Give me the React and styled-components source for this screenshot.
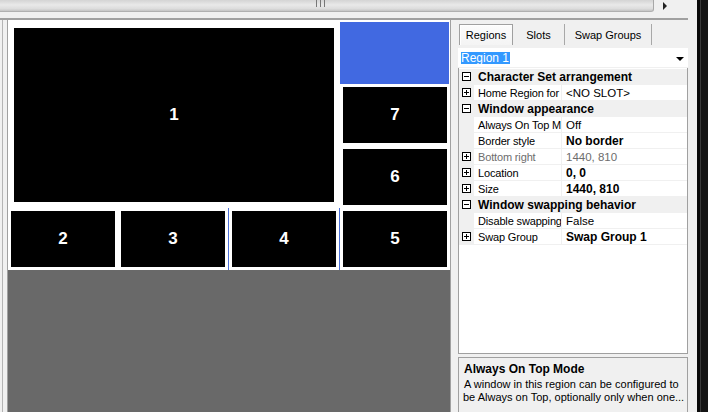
import React from "react";
import styled, { createGlobalStyle } from "styled-components";

const GlobalStyle = createGlobalStyle`
  html, body {
    margin: 0;
    padding: 0;
    background: #f0f0f0;
    overflow: hidden;
  }
  body {
    font-family: "Liberation Sans", Arial, sans-serif;
    font-size: 11px;
    color: #000;
  }
`;

const Frame = styled.div`
  display: flex;
  width: 708px;
  height: 412px;
  overflow: hidden;
`;

const Main = styled.div`
  display: flex;
  flex-direction: column;
  width: 688px;
  flex-shrink: 0;
  background: #f0f0f0;
`;

const ScrollRow = styled.div`
  display: flex;
  align-items: flex-start;
  height: 18px;
  border-bottom: 2px solid #a0a0a0;
  box-sizing: content-box;
`;

const Thumb = styled.div`
  width: 653px;
  height: 11px;
  background: linear-gradient(#d4d4d4, #e9e9e9 45%, #dcdcdc 80%, #c4c4c4);
  border-bottom: 1px solid #b0b0b0;
  border-right: 1px solid #a8a8a8;
  border-radius: 0 0 3px 0;
  display: flex;
  justify-content: center;
`;

const Grip = styled.div`
  margin-left: -12px;
  width: 7px;
  height: 7px;
  border-left: 1px solid #777;
  border-right: 1px solid #777;
  position: relative;
  &::after {
    content: "";
    position: absolute;
    left: 3px;
    top: 0;
    width: 1px;
    height: 7px;
    background: #777;
  }
`;

const ArrowRight = styled.div`
  margin: 2px 0 0 9px;
  width: 0;
  height: 0;
  border-top: 4px solid transparent;
  border-bottom: 4px solid transparent;
  border-left: 4px solid #222;
`;

const Body = styled.div`
  flex: 1;
  display: flex;
  min-height: 0;
`;

const Gutter = styled.div`
  flex-shrink: 0;
  width: 4px;
  margin-left: 2px;
  border-left: 1px solid #b4b4b4;
  border-right: 1px solid #a0a0a0;
`;

const Preview = styled.div`
  flex-shrink: 0;
  width: 442px;
  background: #696969;
  border-right: 1px solid #a0a0a0;
`;

const Canvas = styled.div`
  position: relative;
  width: 442px;
  height: 250px;
  background: #fff;
`;

const Region = styled.div`
  position: absolute;
  left: ${(p) => p.$x}px;
  top: ${(p) => p.$y}px;
  width: ${(p) => p.$w}px;
  height: ${(p) => p.$h}px;
  background: ${(p) => (p.$active ? "#4169e1" : "#000")};
  color: #fff;
  font-family: "Liberation Sans", Arial, sans-serif;
  font-weight: bold;
  font-size: 17px;
  display: flex;
  align-items: center;
  justify-content: center;
`;

const Marker = styled.div`
  position: absolute;
  left: ${(p) => p.$x}px;
  top: 188px;
  width: 1px;
  height: 62px;
  background: #4a6fd8;
`;

const Side = styled.div`
  flex: 1;
  min-width: 0;
  display: flex;
  flex-direction: column;
  padding: 4px 0 0 7px;
`;

const Tabs = styled.div`
  display: flex;
  height: 21px;
  align-items: stretch;
`;

const Tab = styled.div`
  box-sizing: border-box;
  width: ${(p) => p.$w}px;
  display: flex;
  align-items: center;
  justify-content: center;
  border-right: 1px solid #a8a8a8;
  ${(p) =>
    p.$selected &&
    `
    border: 1px solid #a0a0a0;
    border-bottom: none;
    background: linear-gradient(#fcfcfc, #f4f4f4);
    box-shadow: inset 1px 1px 0 #fff;
    margin-left: 1px;
  `}
`;

const Combo = styled.div`
  margin-top: 3px;
  height: 19px;
  background: #fff;
  display: flex;
  align-items: center;
  justify-content: space-between;
  padding: 0 4px 0 3px;
`;

const Selected = styled.span`
  background: #3399ff;
  color: #fff;
  padding: 0 1px 0 0;
  line-height: 12px;
  font-size: 12px;
`;

const DropArrow = styled.span`
  width: 0;
  height: 0;
  border-left: 4px solid transparent;
  border-right: 4px solid transparent;
  border-top: 4px solid #000;
  margin-top: 2px;
`;

const Grid = styled.div`
  margin-top: 1px;
  height: 286px;
  box-sizing: border-box;
  padding-top: 1px;
  background: #fff;
  border: 1px solid #a0a0a0;
  border-top: none;
  display: flex;
  flex-direction: column;
`;

const Row = styled.div`
  display: flex;
  height: 16px;
  flex-shrink: 0;
  box-sizing: border-box;
  border-bottom: 1px solid #f0f0f0;
  background: ${(p) => (p.$category ? "#f0f0f0" : "#fff")};
`;

const Margin = styled.div`
  width: 15px;
  flex-shrink: 0;
  background: #f0f0f0;
  display: flex;
  align-items: center;
  justify-content: center;
`;

const Box = styled.div`
  width: 7px;
  height: 7px;
  border: 1px solid #000;
  position: relative;
  background: #fff;
  &::before {
    content: "";
    position: absolute;
    left: 1px;
    top: 3px;
    width: 5px;
    height: 1px;
    background: #000;
  }
  &::after {
    content: "";
    display: ${(p) => (p.$open ? "none" : "block")};
    position: absolute;
    left: 3px;
    top: 1px;
    width: 1px;
    height: 5px;
    background: #000;
  }
`;

const CatTitle = styled.div`
  font-weight: bold;
  font-size: 12px;
  padding-left: 4px;
  line-height: 16px;
`;

const Label = styled.div`
  width: 88px;
  flex-shrink: 0;
  padding-left: 4px;
  box-sizing: border-box;
  border-right: 1px solid #f0f0f0;
  white-space: nowrap;
  overflow: hidden;
  line-height: 16px;
  font-size: 11px;
  letter-spacing: -0.15px;
  color: ${(p) => (p.$dim ? "#6d6d6d" : "#000")};
`;

const Value = styled.div`
  padding-left: 4px;
  line-height: 16px;
  font-size: ${(p) => (p.$bold ? "12px" : "11.5px")};
  white-space: nowrap;
  font-weight: ${(p) => (p.$bold ? "bold" : "normal")};
  color: ${(p) => (p.$dim ? "#6d6d6d" : "#000")};
`;

const Description = styled.div`
  margin-top: 3px;
  flex: 1;
  border: 1px solid #a0a0a0;
  border-bottom: none;
  padding: 4px 5px 0 5px;
  font-size: 11px;
  overflow: hidden;
`;

const DescTitle = styled.div`
  font-weight: bold;
  font-size: 12px;
  line-height: 14px;
  margin-bottom: 2px;
`;

const DescLine = styled.div`
  line-height: 13px;
  white-space: nowrap;
  margin-left: ${(p) => (p.$indent ? "-1px" : "0")};
`;

const EdgeStrip = styled.div`
  width: 9px;
  flex-shrink: 0;
  background: #f0f0f0;
`;

const DarkEdge = styled.div`
  width: 11px;
  flex-shrink: 0;
  background: #141414;
  border-left: 3px solid #0a0a0a;
  box-sizing: border-box;
  box-shadow: inset 1px 0 0 #3a3a3a;
`;

const regions = [
  { id: "top", x: 332, y: 2, w: 109, h: 62, active: true },
  { id: "1", x: 6, y: 8, w: 320, h: 174 },
  { id: "7", x: 335, y: 67, w: 104, h: 56 },
  { id: "6", x: 335, y: 129, w: 104, h: 56 },
  { id: "2", x: 3, y: 191, w: 104, h: 56 },
  { id: "3", x: 113, y: 191, w: 104, h: 56 },
  { id: "4", x: 224, y: 191, w: 104, h: 56 },
  { id: "5", x: 335, y: 191, w: 104, h: 56 },
];

const rows = [
  { cat: "Character Set arrangement" },
  { label: "Home Region for", value: "<NO SLOT>", expand: true },
  { cat: "Window appearance" },
  { label: "Always On Top Mode", value: "Off" },
  { label: "Border style", value: "No border", bold: true },
  { label: "Bottom right", value: "1440, 810", expand: true, dim: true },
  { label: "Location", value: "0, 0", expand: true, bold: true },
  { label: "Size", value: "1440, 810", expand: true, bold: true },
  { cat: "Window swapping behavior" },
  { label: "Disable swapping", value: "False" },
  { label: "Swap Group", value: "Swap Group 1", expand: true, bold: true },
];

export default function App() {
  return (
    <>
      <GlobalStyle />
      <Frame>
        <Main>
          <ScrollRow>
            <Thumb>
              <Grip />
            </Thumb>
            <ArrowRight />
          </ScrollRow>
          <Body>
            <Gutter />
            <Preview>
              <Canvas>
                {regions.map((r) => (
                  <Region key={r.id} $x={r.x} $y={r.y} $w={r.w} $h={r.h} $active={r.active}>
                    {r.active ? "" : r.id}
                  </Region>
                ))}
                <Marker $x={220} />
                <Marker $x={331} />
              </Canvas>
            </Preview>
            <Side>
              <Tabs>
                <Tab $selected $w={54}>Regions</Tab>
                <Tab $w={52}>Slots</Tab>
                <Tab $w={87}>Swap Groups</Tab>
              </Tabs>
              <Combo>
                <Selected>Region 1</Selected>
                <DropArrow />
              </Combo>
              <Grid>
                {rows.map((r, i) =>
                  r.cat ? (
                    <Row key={i} $category>
                      <Margin>
                        <Box $open />
                      </Margin>
                      <CatTitle>{r.cat}</CatTitle>
                    </Row>
                  ) : (
                    <Row key={i}>
                      <Margin>{r.expand && <Box />}</Margin>
                      <Label $dim={r.dim}>{r.label}</Label>
                      <Value $bold={r.bold} $dim={r.dim}>
                        {r.value}
                      </Value>
                    </Row>
                  )
                )}
              </Grid>
              <Description>
                <DescTitle>Always On Top Mode</DescTitle>
                <DescLine>A window in this region can be configured to</DescLine>
                <DescLine $indent>be Always on Top, optionally only when one...</DescLine>
              </Description>
            </Side>
          </Body>
        </Main>
        <EdgeStrip />
        <DarkEdge />
      </Frame>
    </>
  );
}
